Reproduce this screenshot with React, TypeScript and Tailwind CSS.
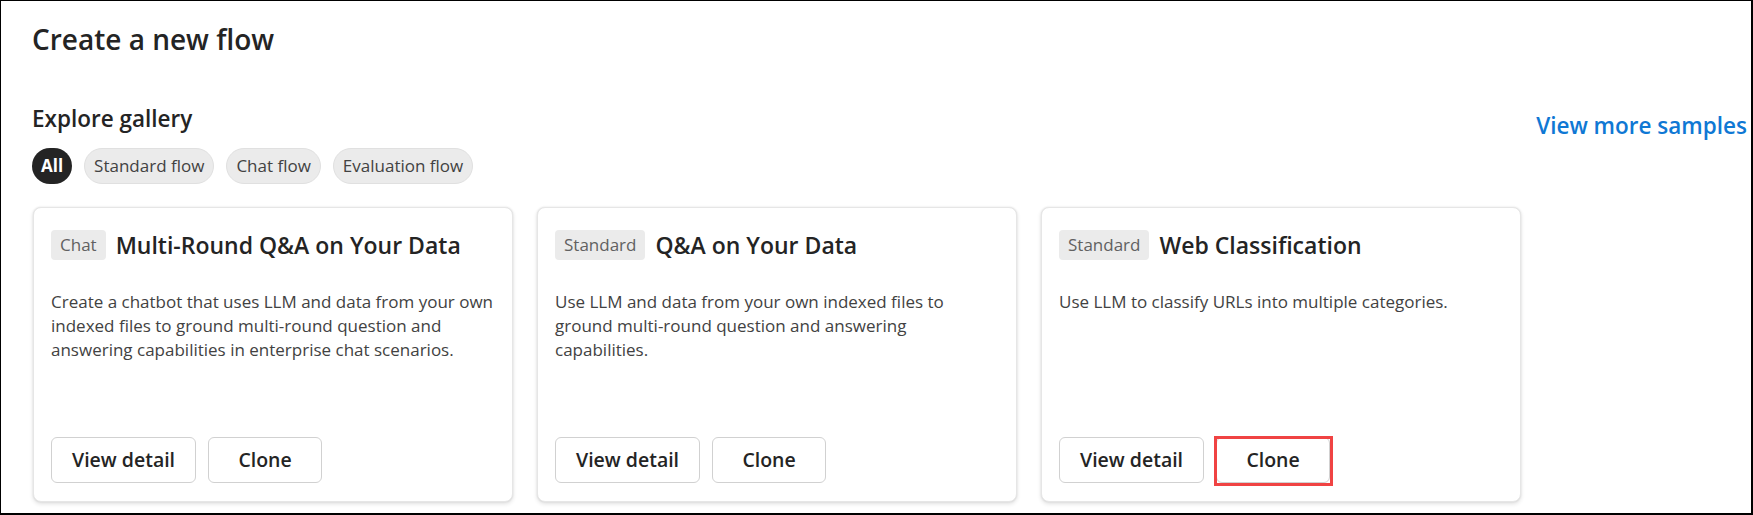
import React from "react";

type Card = { tag: string; title: string; desc: string; highlight?: boolean };

const cards: Card[] = [
  {
    tag: "Chat",
    title: "Multi-Round Q&A on Your Data",
    desc: "Create a chatbot that uses LLM and data from your own indexed files to ground multi-round question and answering capabilities in enterprise chat scenarios.",
  },
  {
    tag: "Standard",
    title: "Q&A on Your Data",
    desc: "Use LLM and data from your own indexed files to ground multi-round question and answering capabilities.",
  },
  {
    tag: "Standard",
    title: "Web Classification",
    desc: "Use LLM to classify URLs into multiple categories.",
    highlight: true,
  },
];

function Btn({ children, red }: { children: React.ReactNode; red?: boolean }) {
  return (
    <div className="relative">
      <button className="h-[46px] min-w-[114px] px-[20px] rounded-md border border-[#d1d1d1] bg-white text-[19.5px] font-semibold text-[#242424] leading-none">
        {children}
      </button>
      {red && (
        <div className="absolute left-[-2px] top-[-1px] w-[119px] h-[50px] border-[3px] border-[#f04343] pointer-events-none" />
      )}
    </div>
  );
}

export default function App() {
  return (
    <div className="w-[1753px] h-[515px] bg-white border-t border-l border-r-2 border-b-2 border-black overflow-hidden font-['Open_Sans',sans-serif] text-[#242424]">
      <div className="pl-[31px] pr-[4px] pt-[20px]">
        <h1 className="text-[28px] leading-[36px] font-semibold">Create a new flow</h1>
        <div className="mt-[47px] flex justify-between items-start">
          <div>
            <h2 className="text-[22.5px] leading-[30px] font-semibold">Explore gallery</h2>
            <div className="mt-[14px] flex gap-[12px]">
              <span className="h-[36px] px-[9px] rounded-full bg-[#242424] text-white text-[17px] font-bold flex items-center">
                All
              </span>
              {["Standard flow", "Chat flow", "Evaluation flow"].map((p) => (
                <span
                  key={p}
                  className="h-[36px] px-[9px] rounded-full bg-[#ebebeb] border border-[#e0e0e0] text-[#424242] text-[17px] flex items-center"
                >
                  {p}
                </span>
              ))}
            </div>
          </div>
          <a className="mt-[7px] text-[22.5px] leading-[30px] font-semibold text-[#0f78d4]">View more samples</a>
        </div>
        <div className="mt-[23px] ml-[1px] flex gap-[24px]">
          {cards.map((c) => (
            <div
              key={c.title}
              className="w-[480px] h-[295px] rounded-lg border border-[#e6e6e6] bg-white shadow-[0_2px_4px_rgba(0,0,0,0.12),0_0_2px_rgba(0,0,0,0.10)] pt-[22px] px-[17px] pb-[18px] flex flex-col"
            >
              <div className="flex items-center gap-[10px]">
                <span className="h-[30px] px-[9px] rounded bg-[#ebebeb] text-[#616161] text-[17px] leading-[30px]">
                  {c.tag}
                </span>
                <span className="text-[23px] leading-[30px] font-semibold">{c.title}</span>
              </div>
              <p className="mt-[30px] text-[17px] leading-[24px] text-[#424242]">{c.desc}</p>
              <div className="mt-auto flex gap-[12px]">
                <Btn>View detail</Btn>
                <Btn red={c.highlight}>Clone</Btn>
              </div>
            </div>
          ))}
        </div>
      </div>
    </div>
  );
}
